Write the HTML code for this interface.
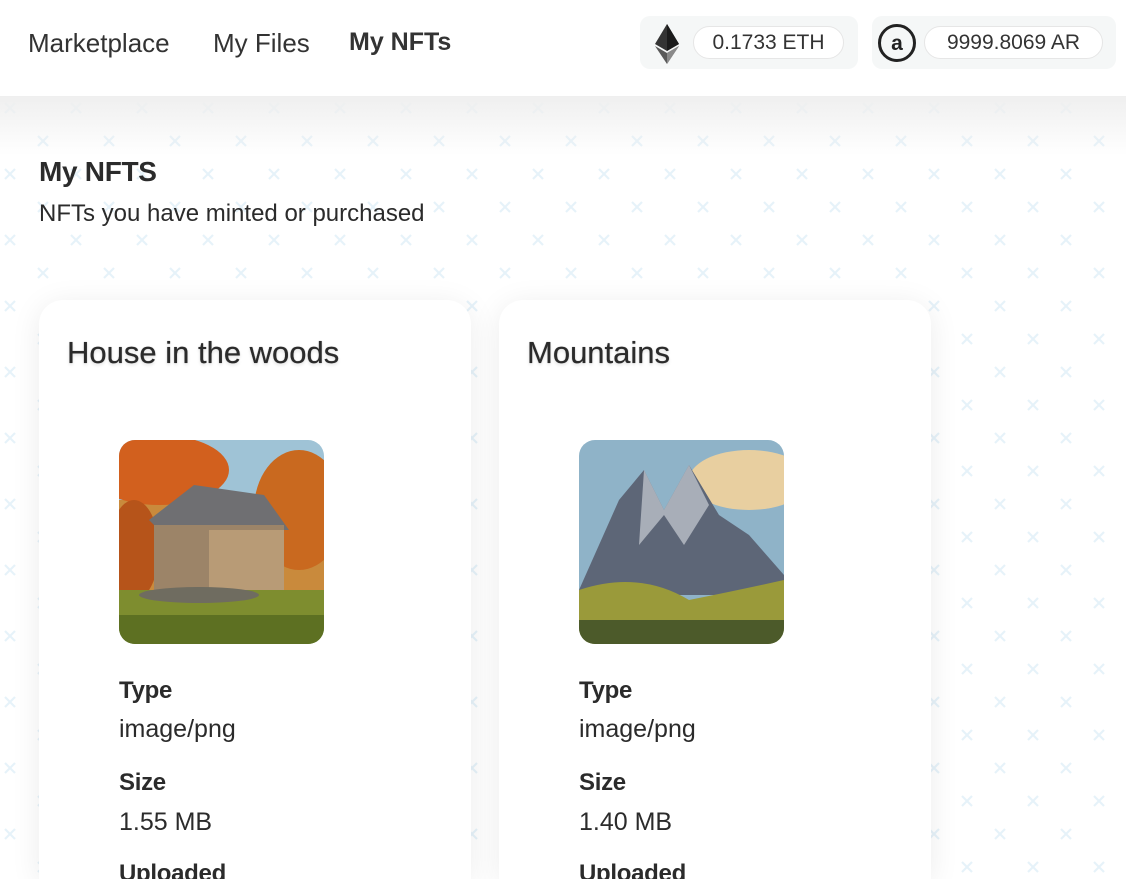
<!DOCTYPE html>
<html style="height:879px;overflow:hidden"><head><meta charset="utf-8"><style>
*{margin:0;padding:0;box-sizing:border-box}
body{width:1126px;height:879px;overflow:hidden;font-family:"Liberation Sans",sans-serif;color:#2b2b2b;position:relative;background:#fff}
.bg{position:absolute;left:0;top:96px;width:1126px;height:783px;
background-image:url("data:image/svg+xml;utf8,<svg xmlns='http://www.w3.org/2000/svg' width='66' height='66'><g stroke='%23e6f2f9' stroke-width='2.2'><path d='M5 12l10 10M15 12l-10 10M38 45l10 10M48 45l-10 10'/></g></svg>");background-position:0 -5px}
.shade{position:absolute;left:0;top:96px;width:1126px;height:60px;background:linear-gradient(#efefef,rgba(255,255,255,0))}
header{position:absolute;left:0;top:0;width:1126px;height:96px;background:#fff}
nav a{position:absolute;top:28px;font-size:26px;color:#333;text-decoration:none}
.pill{position:absolute;top:16px;height:53px;background:#f5f7f7;border-radius:10px}
.amt{position:absolute;top:10px;height:33px;border:1px solid #e6e6e6;background:#fff;border-radius:17px;font-size:21px;line-height:31px;text-align:center;color:#333}
h1{position:absolute;left:39px;top:156px;font-size:28px;font-weight:bold;letter-spacing:-0.3px}
.sub{position:absolute;left:39px;top:200px;font-size:24px}
.card{position:absolute;top:300px;width:432px;height:579px;background:#fff;border-radius:24px 24px 0 0;box-shadow:0 4px 30px rgba(0,0,0,0.08);overflow:hidden}
.card h2{position:absolute;left:28px;top:35px;font-size:31px;font-weight:normal;text-shadow:0 0 0.6px #333,0 2px 3px rgba(0,0,0,0.12)}
.img{position:absolute;left:80px;top:140px;width:205px;height:204px;border-radius:16px;overflow:hidden}
.lb{position:absolute;left:80px;font-size:24px;font-weight:bold;letter-spacing:-0.3px}
.vl{position:absolute;left:80px;font-size:25px}
</style></head><body>
<div class="bg"></div><div class="shade"></div>
<header>
<nav><a style="left:28px">Marketplace</a><a style="left:213px">My Files</a><a style="left:349px;font-weight:bold;font-size:25px">My NFTs</a></nav>
<div class="pill" style="left:640px;width:218px">
<svg style="position:absolute;left:14px;top:8px" width="26" height="40" viewBox="0 0 26 40"><path d="M13 0L1 20l12 7 12-7z" fill="#343434"/><path d="M13 0v27l12-7z" fill="#1b1b1b"/><path d="M1 22l12 18 12-18-12 7z" fill="#5a5a5a"/><path d="M13 29v11l12-18z" fill="#8a8a8a"/></svg>
<div class="amt" style="left:53px;width:151px">0.1733 ETH</div></div>
<div class="pill" style="left:872px;width:244px">
<svg style="position:absolute;left:5px;top:7px" width="40" height="40" viewBox="0 0 40 40"><circle cx="20" cy="20" r="17.5" fill="none" stroke="#222" stroke-width="3"/><text x="20" y="27" font-size="21" font-weight="bold" text-anchor="middle" font-family="Liberation Sans" fill="#222">a</text></svg>
<div class="amt" style="left:52px;width:179px">9999.8069 AR</div></div>
</header>
<h1>My NFTS</h1>
<div class="sub">NFTs you have minted or purchased</div>

<div class="card" style="left:39px">
<h2>House in the woods</h2>
<div class="img"><svg width="205" height="204" viewBox="0 0 205 204">
<rect width="205" height="204" fill="#9fc3d6"/><rect y="60" width="205" height="100" fill="#c98a3c"/>
<ellipse cx="40" cy="30" rx="70" ry="35" fill="#d2601e"/><ellipse cx="180" cy="70" rx="45" ry="60" fill="#c9691f"/><ellipse cx="15" cy="110" rx="25" ry="50" fill="#b6541a"/>
<path d="M30 80l45-35 70 10 25 35H40z" fill="#6f6f72"/><rect x="35" y="85" width="130" height="65" fill="#9c8468"/><rect x="90" y="90" width="75" height="60" fill="#b89b76"/>
<rect x="0" y="150" width="205" height="54" fill="#7e8d2f"/><rect x="0" y="175" width="205" height="29" fill="#5d7022"/><ellipse cx="80" cy="155" rx="60" ry="8" fill="#6f6c60"/>
</svg></div>
<div class="lb" style="top:377px">Type</div><div class="vl" style="top:415px">image/png</div>
<div class="lb" style="top:469px">Size</div><div class="vl" style="top:508px">1.55 MB</div>
<div class="lb" style="top:560px">Uploaded</div>
</div>

<div class="card" style="left:499px">
<h2>Mountains</h2>
<div class="img"><svg width="205" height="204" viewBox="0 0 205 204">
<rect width="205" height="204" fill="#8fb3c8"/><ellipse cx="170" cy="40" rx="60" ry="30" fill="#e8cfa0"/>
<path d="M0 150L40 60l25-30 20 40 25-45 30 50 30 20 35 40v20H0z" fill="#5d6677"/><path d="M65 30l20 40 25-45 20 40-25 40-20-30-25 30z" fill="#c9cdd4" opacity=".7"/>
<path d="M0 150q60-20 110 10q50-10 95-20v64H0z" fill="#9a9a3a"/><rect y="180" width="205" height="24" fill="#4c5a2a"/>
</svg></div>
<div class="lb" style="top:377px">Type</div><div class="vl" style="top:415px">image/png</div>
<div class="lb" style="top:469px">Size</div><div class="vl" style="top:508px">1.40 MB</div>
<div class="lb" style="top:560px">Uploaded</div>
</div>
</body></html>
